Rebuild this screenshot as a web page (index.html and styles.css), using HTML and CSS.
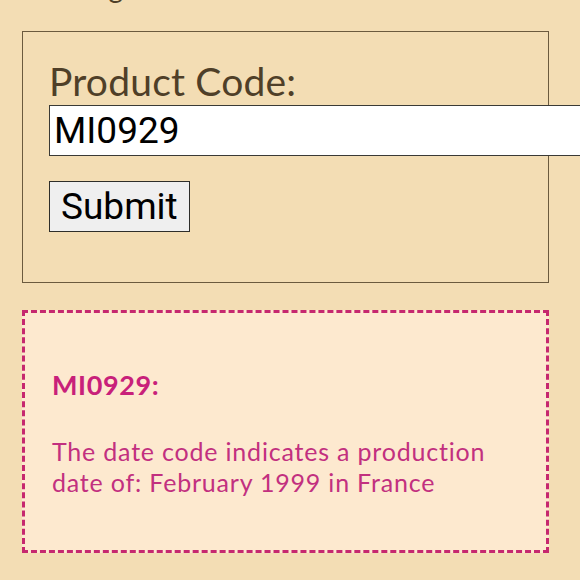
FILE: index.html
```html
<!DOCTYPE html>
<html lang="en">
<head>
<meta charset="utf-8">
<title>Date Code Lookup</title>
<link rel="stylesheet" href="styles.css">
</head>
<body>
<div class="page">
  <p class="intro">Using</p>
  <form class="lookup">
    <label class="lookup-label" for="code">Product Code:</label>
    <input class="lookup-input" id="code" type="text" value="MI0929">
    <button class="lookup-btn" type="button">Submit</button>
  </form>
  <section class="result">
    <h2 class="result-title">MI0929:</h2>
    <p class="result-text">The date code indicates a production date of: February 1999 in France</p>
  </section>
</div>
</body>
</html>
```

FILE: styles.css
```css
html, body {
  margin: 0;
  padding: 0;
  overflow: hidden;
  background: #f3ddb4;
}
.page {
  width: 527px;
  margin-left: 22px;
  font-family: Lato, "Open Sans", sans-serif;
  color: #4f3f28;
}
.intro {
  margin: -29px 0 0 32px;
  font-size: 28px;
  line-height: 32px;
  height: 32px;
}
.lookup {
  display: flex;
  flex-direction: column;
  align-items: flex-start;
  border: 1px solid #6b5a3e;
  padding: 26px 0 50px 26px;
  margin-top: 28px;
  box-sizing: border-box;
  height: 252px;
}
.lookup-label {
  font-size: 39px;
  line-height: 46px;
  color: #4f3f28;
  margin-bottom: 1px;
  letter-spacing: 0.2px;
}
.lookup-input {
  width: 600px;
  height: 51px;
  box-sizing: border-box;
  border: 1.5px solid #3a3a36;
  background: #fff;
  font-family: Roboto, sans-serif;
  font-size: 37px;
  padding: 0 4px;
  margin: 0;
  color: #000;
  outline: none;
}
.lookup-btn {
  margin-top: 25px;
  height: 51px;
  box-sizing: border-box;
  background: #efefef;
  border: 1.5px solid #2e2e2a;
  border-radius: 0;
  font-family: Roboto, sans-serif;
  font-size: 37px;
  color: #000;
  padding: 0 11px;
}
.result {
  margin-top: 27px;
  border: 3px dashed #c6286f;
  background: #fde9cf;
  height: 243px;
  box-sizing: border-box;
  padding: 56px 26px 0 27px;
  color: #c2307f;
}
.result-title {
  margin: 0;
  font-size: 27px;
  line-height: 32px;
  font-weight: 700;
  letter-spacing: 0.6px;
  color: #c8207a;
}
.result-title,
.result-text {
  font-family: Lato, "Open Sans", sans-serif;
}
.result-text {
  margin: 35px 0 0 0;
  font-size: 25px;
  line-height: 31px;
  letter-spacing: 0.8px;
}
```
